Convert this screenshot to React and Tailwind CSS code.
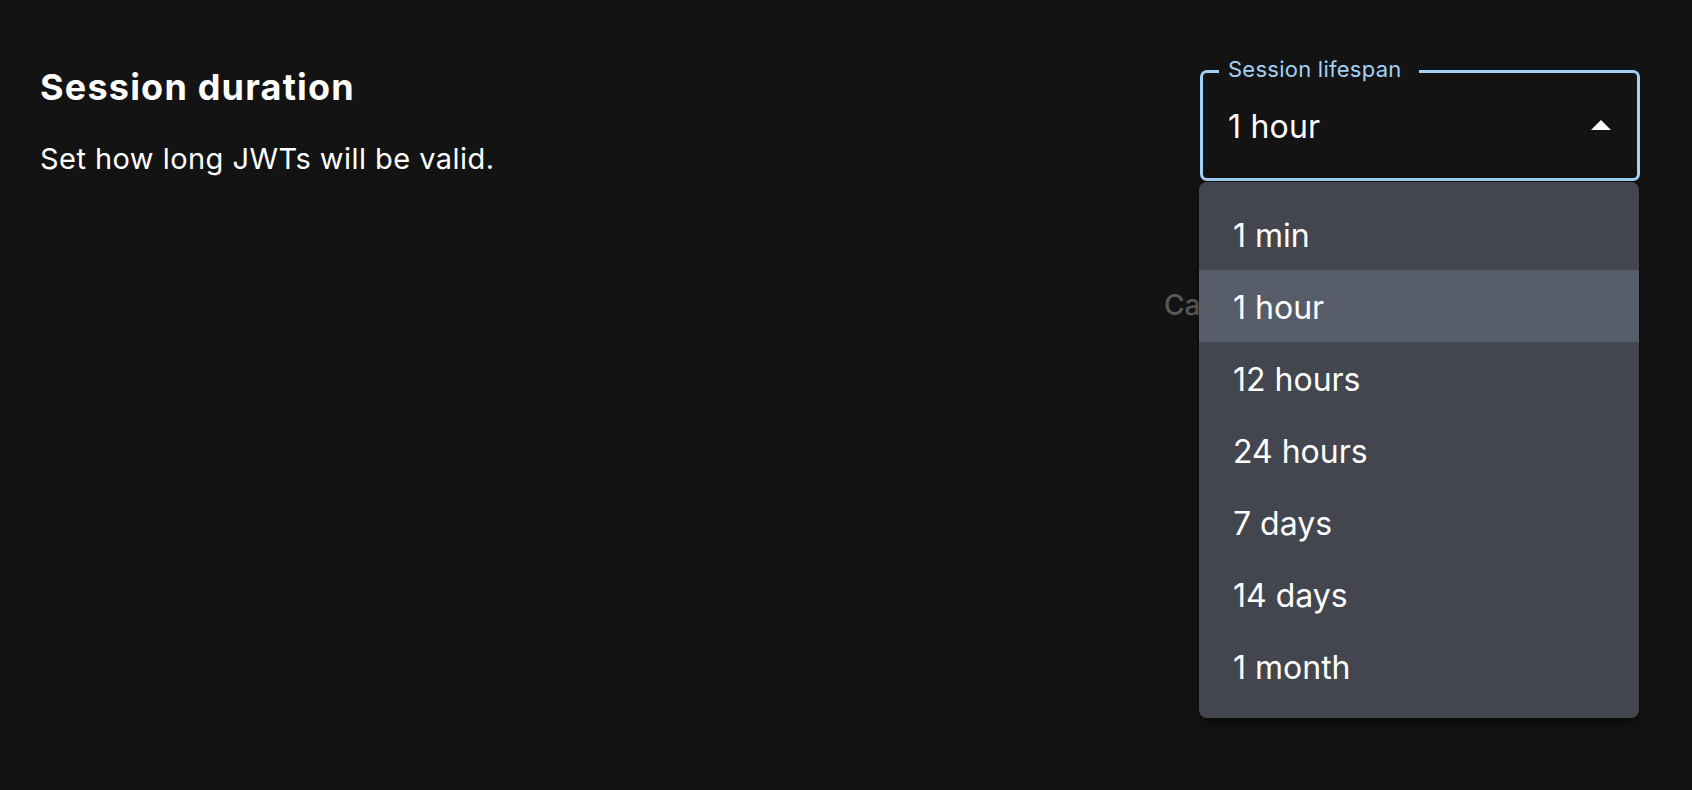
import React from "react";

const options = ["1 min", "1 hour", "12 hours", "24 hours", "7 days", "14 days", "1 month"];

export default function App() {
  return (
    <div
      className="w-full h-[790px] bg-[#131313] text-white flex justify-between pl-[40px] pr-[52px] overflow-hidden"
      style={{ fontFamily: "Inter, 'Noto Sans', sans-serif" }}
    >
      <div className="flex flex-col pt-[65px]">
        <h1 className="text-[36px] leading-[44px] font-bold tracking-[1.2px]">Session duration</h1>
        <p className="mt-[32px] text-[29px] leading-[36px] font-normal tracking-[0.45px]">Set how long JWTs will be valid.</p>
      </div>

      <div className="flex flex-col w-[476px] pt-[70px]">
        <div className="relative self-end w-[440px]">
          <div className="h-[111px] border-[3px] border-[#a3d1f6] rounded-[7px] flex items-center justify-between pl-[25px] pr-[26px]">
            <span className="text-[32px] leading-[40px] pt-[3px] tracking-[0.2px]">1 hour</span>
            <svg width="20" height="10" viewBox="0 0 20 10" className="mb-[2px]">
              <path d="M0 10 L10 0 L20 10 Z" fill="#ffffff" />
            </svg>
          </div>
          <span className="absolute left-[19px] top-[-15px] pl-[9px] pr-[17px] bg-[#131313] text-[22px] leading-[28px] tracking-[0.25px] text-[#a3d1f6]">
            Session lifespan
          </span>

          <div className="absolute left-[-1px] top-[112px] w-[440px] bg-[#43464e] rounded-[8px] py-[16px] shadow-[0_5px_5px_-3px_rgba(0,0,0,0.2),0_8px_10px_1px_rgba(0,0,0,0.14),0_3px_14px_2px_rgba(0,0,0,0.12)] z-10">
            {options.map((o) => (
              <div
                key={o}
                className={
                  "h-[72px] flex items-center pl-[34px] pt-[3px] text-[32px] leading-[40px] " +
                  (o === "1 hour" ? "bg-[#565d69]" : "")
                }
              >
                {o}
              </div>
            ))}
          </div>
        </div>

        <div className="mt-[106px] flex items-center gap-[24px]">
          <button className="text-[28px] leading-[36px] font-medium text-[#5a5a5a]">Cancel</button>
          <button className="text-[28px] leading-[36px] font-medium text-[#5a5a5a] bg-[#2a2a2a] rounded-[8px] px-[32px]">Save</button>
        </div>
      </div>
    </div>
  );
}
